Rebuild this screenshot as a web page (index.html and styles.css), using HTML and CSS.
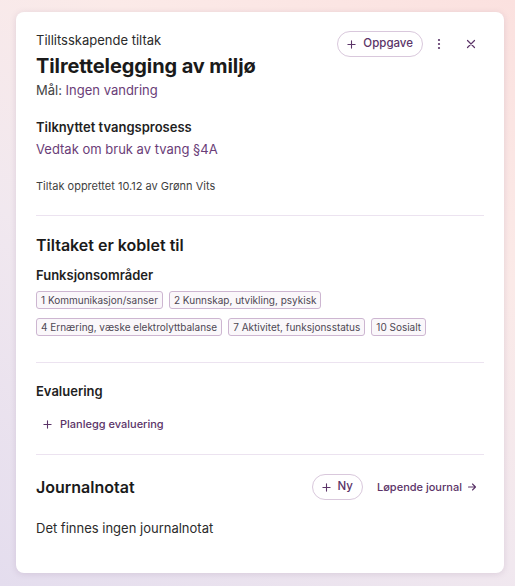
FILE: index.html
```html
<!DOCTYPE html>
<html lang="no">
<head>
<meta charset="utf-8">
<link rel="stylesheet" href="styles.css">
</head>
<body>
<div class="card">
  <header class="head">
    <div class="head-text">
      <div class="kicker">Tillitsskapende tiltak</div>
      <h1 class="title">Tilrettelegging av miljø</h1>
      <div class="goal">Mål: <span class="link">Ingen vandring</span></div>
    </div>
    <div class="head-actions">
      <button class="pill"><svg width="9" height="9" viewBox="0 0 10 10"><path d="M5 1v8M1 5h8" stroke="currentColor" stroke-width="1.2" stroke-linecap="round"/></svg>Oppgave</button>
      <button class="icon-btn"><svg width="4" height="12" viewBox="0 0 4 12"><circle cx="2" cy="2" r="1.1" fill="currentColor"/><circle cx="2" cy="6" r="1.1" fill="currentColor"/><circle cx="2" cy="10" r="1.1" fill="currentColor"/></svg></button>
      <button class="icon-btn"><svg width="10" height="10" viewBox="0 0 10 10"><path d="M1.5 1.5l7 7M8.5 1.5l-7 7" stroke="currentColor" stroke-width="1.2" stroke-linecap="round"/></svg></button>
    </div>
  </header>

  <section class="process">
    <h3 class="label">Tilknyttet tvangsprosess</h3>
    <div class="link">Vedtak om bruk av tvang §4A</div>
    <div class="meta">Tiltak opprettet 10.12 av Grønn Vits</div>
  </section>

  <hr class="divider">

  <section class="block">
    <h2 class="section-title">Tiltaket er koblet til</h2>
    <h3 class="label sub">Funksjonsområder</h3>
    <div class="tags">
      <span class="tag">1 Kommunikasjon/sanser</span>
      <span class="tag">2 Kunnskap, utvikling, psykisk</span>
      <span class="tag">4 Ernæring, væske elektrolyttbalanse</span>
      <span class="tag">7 Aktivitet, funksjonsstatus</span>
      <span class="tag">10 Sosialt</span>
    </div>
  </section>

  <hr class="divider tall">

  <section class="block">
    <h3 class="label">Evaluering</h3>
    <button class="text-btn"><svg width="9" height="9" viewBox="0 0 10 10"><path d="M5 1v8M1 5h8" stroke="currentColor" stroke-width="1.2" stroke-linecap="round"/></svg>Planlegg evaluering</button>
  </section>

  <hr class="divider eval">

  <section class="block">
    <div class="journal-head">
      <h2 class="section-title">Journalnotat</h2>
      <div class="journal-actions">
        <button class="pill small"><svg width="9" height="9" viewBox="0 0 10 10"><path d="M5 1v8M1 5h8" stroke="currentColor" stroke-width="1.2" stroke-linecap="round"/></svg>Ny</button>
        <button class="text-btn arrow">Løpende journal<svg width="10" height="10" viewBox="0 0 10 10"><path d="M1.5 5h7M5.5 2l3 3-3 3" fill="none" stroke="currentColor" stroke-width="1.1" stroke-linecap="round" stroke-linejoin="round"/></svg></button>
      </div>
    </div>
    <p class="empty">Det finnes ingen journalnotat</p>
  </section>
</div>
</body>
</html>
```
FILE: styles.css
```css
* { box-sizing: border-box; }
html, body { height: 100%; }
body {
  margin: 0;
  padding: 12px 11px 0 16px;
  font-family: Inter, "Noto Sans", sans-serif;
  color: #1f1f1f;
  background: linear-gradient(35deg, #e4ddee 0%, #f1e8ef 40%, #fbeae8 70%, #fbe1df 100%);
}
.card {
  width: 488px;
  height: 561px;
  background: #fff;
  border-radius: 8px;
  box-shadow: 0 1px 6px rgba(120, 90, 130, 0.18);
  padding: 20px 20px 0 20px;
  display: flex;
  flex-direction: column;
}
.head { display: flex; justify-content: space-between; align-items: flex-start; }
.kicker { font-size: 13px; line-height: 17px; color: #2b2b2b; }
.title { font-size: 20px; line-height: 26px; font-weight: 700; margin: 4px 0 2px; color: #1a1a1a; letter-spacing: -0.1px; }
.goal { font-size: 13px; line-height: 18px; color: #444; }
.link { color: #6a3d78; }
.head-actions { display: flex; align-items: center; gap: 6px; margin-top: -1px; }
.head-actions .pill { margin-right: -3px; }
.pill {
  display: flex; align-items: center; gap: 7px;
  height: 26px; padding: 0 9px 0 9px;
  border: 1px solid #d9c8dc; border-radius: 13px; background: #fff;
  font: 500 11.5px/1 Inter, sans-serif; color: #5b3468; cursor: pointer;
}
.icon-btn {
  width: 26px; height: 26px; display: flex; align-items: center; justify-content: center;
  border: 0; background: none; color: #5b3468; padding: 0;
}
.block { display: flex; flex-direction: column; }
.process { display: flex; flex-direction: column; margin-top: 19px; }
.label { font-size: 13px; line-height: 18px; font-weight: 600; margin: 0; color: #1f1f1f; }
.process .link { font-size: 13px; line-height: 18px; margin-top: 4px; }
.meta { font-size: 11px; line-height: 14px; color: #3f3f3f; margin-top: 21px; }
.divider { border: 0; border-top: 1px solid #ece3f0; margin: 22px 0 0; width: 100%; }
.divider.tall { margin-top: 26px; }
.divider.eval { margin-top: 23px; }
.section-title { font-size: 16px; line-height: 20px; font-weight: 600; margin: 0; color: #1a1a1a; }
.block .section-title { margin-top: 19px; }
.sub { margin-top: 11px; }
.tags { display: flex; flex-wrap: wrap; gap: 9px 6px; margin-top: 7px; width: 420px; }
.tag {
  font-size: 10px; line-height: 14px; padding: 1px 4px;
  border: 1px solid #cdb6d1; border-radius: 3px; background: #faf7fa; color: #4e4854;
}
.block > .label:first-child { margin-top: 19px; }
.text-btn {
  display: flex; align-items: center; gap: 8px;
  border: 0; background: none; padding: 0;
  font: 500 11px/14px Inter, sans-serif; color: #5b3468; cursor: pointer;
}
.block > .text-btn { margin: 17px 0 0 7px; }
.journal-head { display: flex; justify-content: space-between; align-items: center; margin-top: 19px; }
.journal-head .section-title { margin-top: 0; }
.journal-actions { display: flex; align-items: center; gap: 14px; margin-right: 7px; }
.pill.small { padding: 0 9px 0 9px; gap: 7px; }
.arrow { gap: 5px; }
.empty { font-size: 13px; line-height: 18px; color: #2b2b2b; margin: 19px 0 0; }
```
